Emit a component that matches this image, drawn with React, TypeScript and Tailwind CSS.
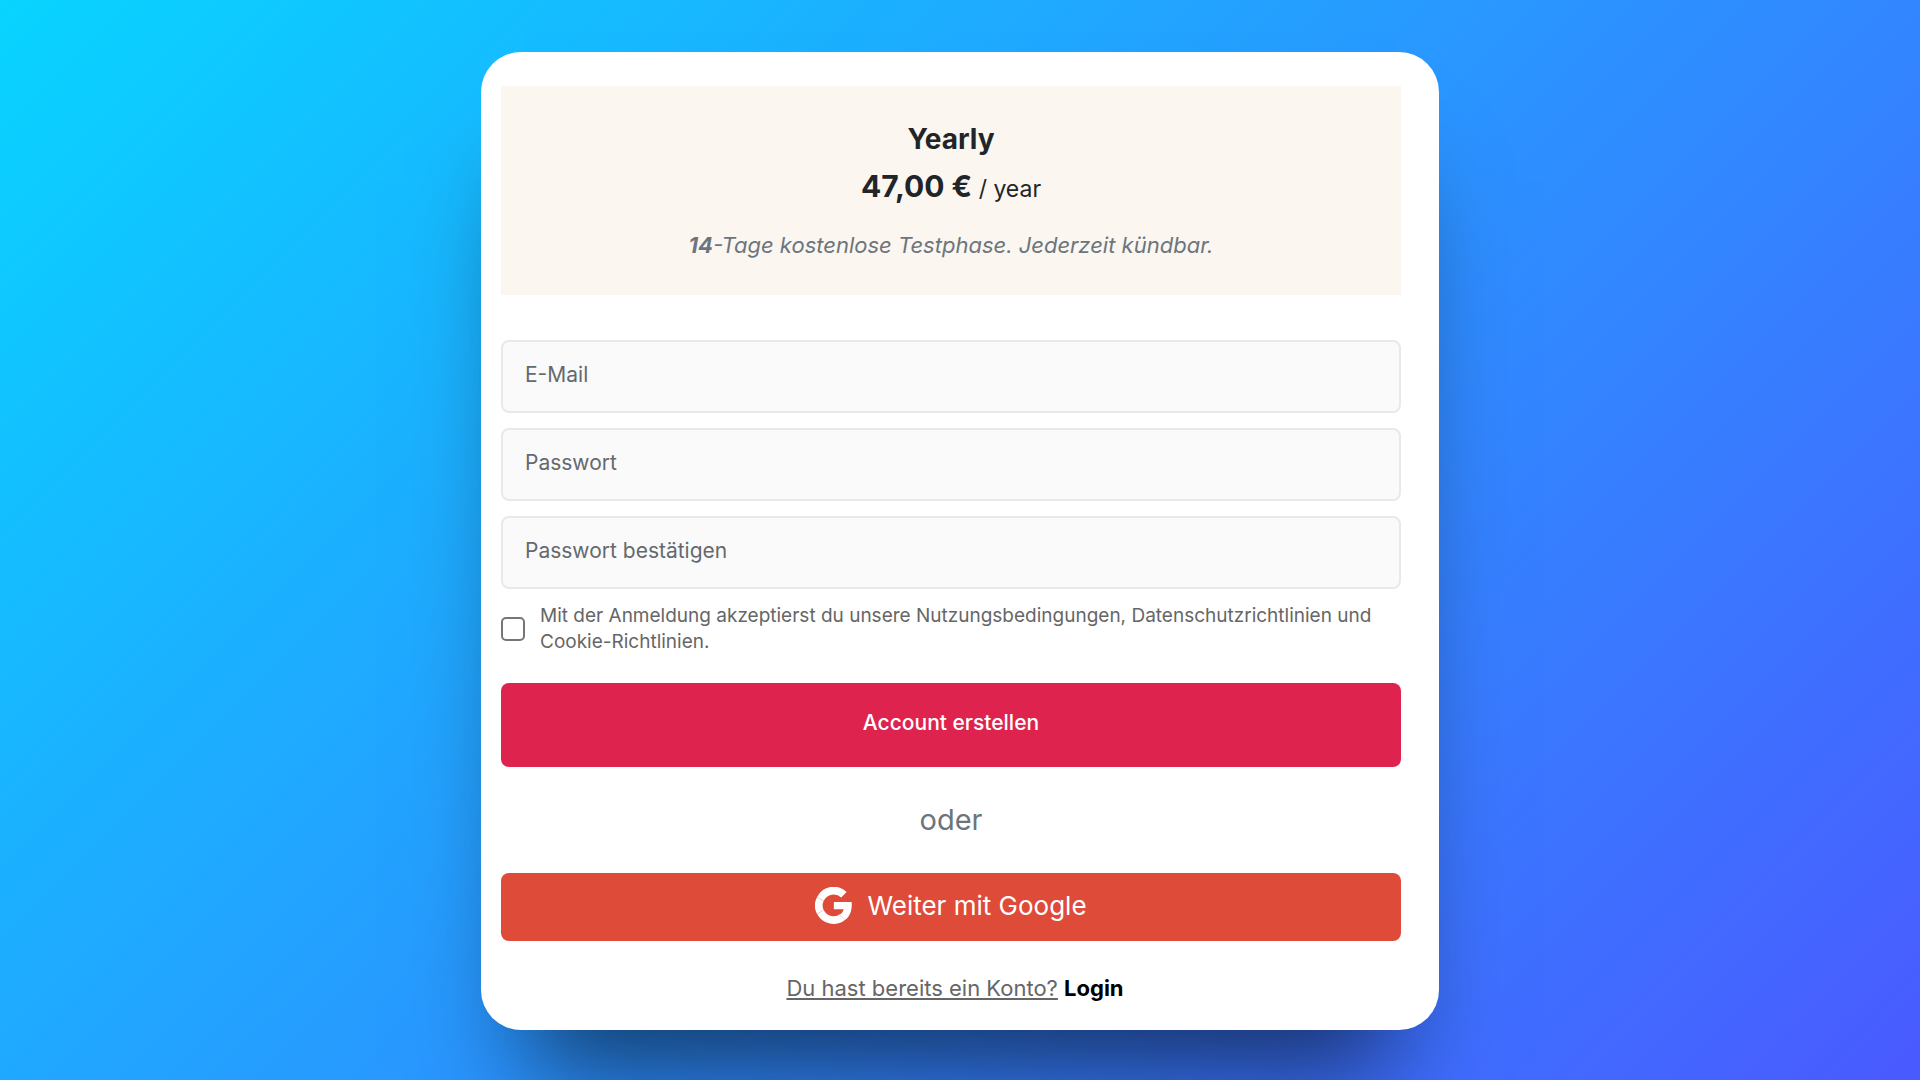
import { useState } from "react";

const FIELDS = [
  { id: "email", type: "email", placeholder: "E-Mail" },
  { id: "password", type: "password", placeholder: "Passwort" },
  { id: "passwordConfirm", type: "password", placeholder: "Passwort bestätigen" },
];

function GoogleIcon() {
  return (
    <svg viewBox="0 0 48 48" className="size-[37px]" aria-hidden="true">
      <g fill="none" stroke="#fff" strokeWidth="10">
        <path d="M37.5 10.2A19 19 0 0 0 7 15.5" />
        <path d="M7.1 15.2A19 19 0 0 0 7.1 32.8" />
        <path d="M7 32.5A19 19 0 0 0 36.3 38.4" />
      </g>
      <path fill="#fff" d="M24.5 19.6H47.5C48.1 26 47.5 36 39.4 42.4L32 36.2C34.9 34.3 36.6 31.6 37.3 28.8H24.5Z" />
      {/* hairline seams between the logo segments */}
      <path stroke="#de4b39" strokeWidth="0.6" strokeOpacity="0.5" d="M2 12L11 18.5M2 36L11 29.5M31.5 35.8L39.5 42.6" />
    </svg>
  );
}

function PlanSummary() {
  return (
    <section className="bg-[#fbf6ef] px-6 pt-8 pb-7 text-center text-[#212529]">
      <h1 className="text-[28px] leading-[42px] font-bold">Yearly</h1>
      <p className="mt-1 text-[23px] leading-[44px]">
        <strong className="text-[30px] font-bold">47,00 €</strong> / year
      </p>
      <p className="mt-3 text-[22px] leading-[44px] text-[#6c757d] italic">
        <strong className="font-bold">14</strong>-Tage kostenlose Testphase. Jederzeit kündbar.
      </p>
    </section>
  );
}

export default function App() {
  const [accepted, setAccepted] = useState(false);

  return (
    <main className="min-h-screen bg-linear-[135deg] from-[#08d4ff] to-[#4a5aff] px-4 py-[52px] font-['Inter',sans-serif]">
      <div className="mx-auto w-full max-w-[958px] rounded-[40px] bg-white pt-[34px] pr-[38px] pb-[26px] pl-5 shadow-[0_85px_100px_-45px_rgba(0,0,0,0.6)]">
        <PlanSummary />

        <form className="mt-[45px]" onSubmit={(e) => e.preventDefault()}>
          <div className="flex flex-col gap-[15px]">
            {FIELDS.map((field) => (
              <input
                key={field.id}
                id={field.id}
                type={field.type}
                placeholder={field.placeholder}
                aria-label={field.placeholder}
                className="h-[73px] w-full rounded-lg border-2 border-[#e9e9e9] bg-[#fafafa] px-[22px] pb-1 text-[21px] text-[#212529] placeholder:text-[#65696d]"
              />
            ))}
          </div>

          <div className="mt-[14px] flex items-center gap-[15px]">
            <input
              id="terms"
              type="checkbox"
              checked={accepted}
              onChange={(e) => setAccepted(e.target.checked)}
              className="size-6 shrink-0 appearance-none rounded-[5px] border-2 border-[#767676] bg-white checked:bg-[#e0234e]"
            />
            <label htmlFor="terms" className="text-[19px] leading-[26px] text-[#666]">
              Mit der Anmeldung akzeptierst du unsere Nutzungsbedingungen, Datenschutzrichtlinien und Cookie-Richtlinien.
            </label>
          </div>

          <button type="submit" className="mt-7 h-[84px] w-full rounded-lg bg-[#df234f] pb-1 text-[21px] font-medium text-white">
            Account erstellen
          </button>
        </form>

        <p className="my-[31px] text-center text-[29px] leading-[44px] text-[#6c757d]">oder</p>

        <button
          type="button"
          className="flex h-[68px] w-full items-center justify-center gap-[15px] rounded-lg bg-[#de4b39] pb-1 text-[26px] text-white"
        >
          <GoogleIcon />
          Weiter mit Google
        </button>

        <p className="mt-[31px] pl-2 text-center text-[22px] leading-8">
          <a href="#login" className="text-[#666] underline">
            Du hast bereits ein Konto?
          </a>{" "}
          <a href="#login" className="font-bold text-black">
            Login
          </a>
        </p>
      </div>
    </main>
  );
}
